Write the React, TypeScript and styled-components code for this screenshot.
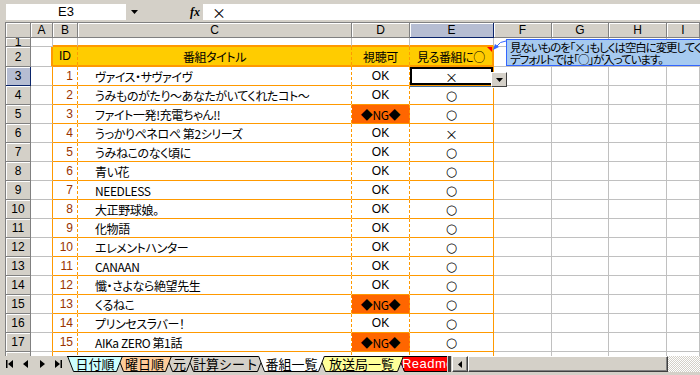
import React from 'react';
import styled, { createGlobalStyle, css } from 'styled-components';

const FACE = '#d4d0c8';
const GRID = '#c0c0c0';
const ORANGE = '#ff9900';
const JP = `"Noto Sans CJK JP", "Noto Sans", sans-serif`;
const LAT = `"Liberation Sans", Arial, sans-serif`;

const GlobalStyle = createGlobalStyle`
  html, body {
    margin: 0;
    padding: 0;
    background: ${FACE};
    overflow: hidden;
  }
  #root {
    width: 700px;
    height: 375px;
  }
`;

const Window = styled.div`
  width: 700px;
  height: 375px;
  display: flex;
  flex-direction: column;
  background: ${FACE};
`;

const FormulaBar = styled.div`
  height: 22px;
  box-sizing: border-box;
  padding: 4px 0 0 6px;
  display: flex;
  align-items: flex-start;
`;

const NameBox = styled.div`
  width: 120px;
  height: 16px;
  background: #fff;
  font: 13px ${LAT};
  line-height: 16px;
  text-align: center;
`;

const NameDrop = styled.div`
  width: 17px;
  height: 16px;
  display: flex;
  align-items: center;
  justify-content: center;
`;

const Fx = styled.div`
  margin-left: 47px;
  width: 13px;
  height: 16px;
  font: italic bold 12px "Liberation Serif", serif;
  line-height: 16px;
`;

const FormulaInput = styled.div`
  flex: 1;
  height: 16px;
  background: #fff;
  padding-left: 9px;
  font: 14px ${JP};
  line-height: 16px;
`;

const Sheet = styled.div`
  position: relative;
  margin-left: 5px;
  height: 334px;
  box-sizing: border-box;
  border-left: 1px solid #808080;
  border-top: 1px solid #808080;
  overflow: hidden;
  display: grid;
  grid-template-columns: 25px 22px 25px 274px 58px 84px 58px 57px 58px 1fr;
  grid-template-rows: 15px 9px 20px repeat(16, 19px);
  background: #fff;
`;

const HeaderCell = styled.div<{ $sel?: boolean }>`
  box-sizing: border-box;
  background: ${p => (p.$sel ? '#b6bdd2' : FACE)};
  border-right: 1px solid ${p => (p.$sel ? '#0a246a' : '#808080')};
  border-bottom: 1px solid ${p => (p.$sel ? '#0a246a' : '#808080')};
  box-shadow: inset 1px 1px 0 #fff;
  font: 12px ${LAT};
  color: #000;
  display: flex;
  align-items: center;
  justify-content: center;
  overflow: hidden;
`;

type Edge = 'grid' | 'dash' | 'solid' | 'thick';

interface CellProps {
  $right?: Edge;
  $bottom?: Edge;
  $fill?: string;
  $align?: 'left' | 'center' | 'right';
  $color?: string;
  $pad?: number;
  $active?: boolean;
}

const edge = (e: Edge = 'grid') => {
  if (e === 'thick') return `2px solid ${ORANGE}`;
  if (e === 'solid') return `1px solid ${ORANGE}`;
  if (e === 'dash') return `1px solid transparent`;
  return `1px solid ${GRID}`;
};

const Cell = styled.div<CellProps>`
  position: relative;
  box-sizing: border-box;
  min-width: 0;
  background-color: ${p => p.$fill || '#fff'};
  border-right: ${p => edge(p.$right)};
  border-bottom: ${p => edge(p.$bottom)};
  ${p =>
    p.$right === 'dash' &&
    css`
      background-image: linear-gradient(to bottom, ${ORANGE} 3px, transparent 3px);
      background-size: 1px 5px;
      background-position: right top;
      background-repeat: repeat-y;
      background-origin: border-box;
    `}
  font: 12px ${JP};
  font-feature-settings: "palt";
  letter-spacing: -0.4px;
  color: ${p => p.$color || '#000'};
  display: flex;
  align-items: center;
  justify-content: ${p =>
    p.$align === 'right' ? 'flex-end' : p.$align === 'left' ? 'flex-start' : 'center'};
  padding: 0 ${p => (p.$align === 'right' ? 4 : 0)}px 0 ${p => p.$pad || 0}px;
  white-space: nowrap;
  ${p =>
    p.$active &&
    css`
      box-shadow: inset 0 0 0 2px #000, 0 1px 0 #3a6ea5;
      z-index: 2;
    `}
`;

const IdText = styled.span`
  font: 12px ${LAT};
  letter-spacing: 0;
`;

const Mark = styled.span<{ $circle?: boolean }>`
  font: ${p => (p.$circle ? `13px "DejaVu Sans", sans-serif` : `13px ${JP}`)};
  color: #000;
  letter-spacing: 0;
`;

const CommentMark = styled.div`
  position: absolute;
  top: 0;
  right: 0;
  width: 0;
  height: 0;
  border-top: 5px solid #ff0000;
  border-left: 5px solid transparent;
`;

const FillHandle = styled.div`
  position: absolute;
  right: -3px;
  bottom: -3px;
  width: 5px;
  height: 5px;
  background: #000;
  border: 1px solid #fff;
  box-sizing: border-box;
`;

const DropButton = styled.div`
  position: absolute;
  left: calc(100% - 2px);
  top: 5px;
  width: 16px;
  height: 15px;
  box-sizing: border-box;
  background: ${FACE};
  border-top: 1px solid #fff;
  border-left: 1px solid #fff;
  border-right: 1px solid #404040;
  border-bottom: 1px solid #404040;
  display: flex;
  align-items: center;
  justify-content: center;
  z-index: 3;
`;

const Comment = styled.div`
  position: absolute;
  left: 500px;
  top: 16px;
  width: 210px;
  height: 27px;
  box-sizing: border-box;
  background: #a6caf0;
  border: 1px solid #3366ff;
  padding: 0 0 0 3px;
  font: 11.5px ${JP};
  font-feature-settings: "palt";
  letter-spacing: -1.1px;
  line-height: 12px;
  white-space: nowrap;
  z-index: 4;
  display: flex;
  flex-direction: column;
  justify-content: center;
`;

const CommentArrow = styled.svg`
  position: absolute;
  left: 486px;
  top: 16px;
  z-index: 4;
`;

const TabBar = styled.div`
  height: 19px;
  display: flex;
  align-items: flex-start;
`;

const Nav = styled.div`
  width: 67px;
  height: 16px;
  display: flex;
  align-items: center;
  padding-left: 2px;
  box-sizing: border-box;
`;

const NavButton = styled.div`
  width: 16px;
  height: 16px;
  display: flex;
  align-items: center;
  justify-content: center;
`;

const TabStrip = styled.div`
  width: 380px;
  height: 16px;
  display: flex;
  overflow: hidden;
`;

const Tab = styled.div<{ $w: number; $z: number; $first?: boolean }>`
  position: relative;
  flex: none;
  width: ${p => p.$w}px;
  height: 16px;
  margin-left: ${p => (p.$first ? 0 : -6)}px;
  z-index: ${p => p.$z};
`;

const TabShape = styled.svg`
  position: absolute;
  left: 0;
  top: 0;
`;

const TabLabel = styled.span<{ $color?: string; $latin?: boolean }>`
  position: relative;
  display: block;
  text-align: center;
  font: ${p => (p.$latin ? `13px ${LAT}` : `13px ${JP}`)};
  letter-spacing: ${p => (p.$latin ? 0.5 : 0)}px;
  line-height: 16px;
  white-space: nowrap;
  color: ${p => p.$color || '#000'};
`;

const SplitBox = styled.div`
  width: 3px;
  height: 16px;
  background: #404040;
  border-left: 1px solid ${FACE};
`;

const raised = css`
  box-sizing: border-box;
  background: ${FACE};
  border-top: 1px solid #fff;
  border-left: 1px solid #fff;
  border-right: 1px solid #404040;
  border-bottom: 1px solid #404040;
  box-shadow: inset -1px -1px 0 #808080;
`;

const ScrollButton = styled.div`
  ${raised};
  width: 16px;
  height: 16px;
  margin-left: 1px;
  display: flex;
  align-items: center;
  justify-content: center;
`;

const Thumb = styled.div`
  ${raised};
  width: 200px;
  height: 16px;
`;

const Track = styled.div`
  flex: 1;
  height: 16px;
  background-color: #fff;
  background-image: repeating-conic-gradient(${FACE} 0 25%, #fff 0 50%);
  background-size: 2px 2px;
`;

interface Row {
  id: number;
  title: string;
  ng?: boolean;
  mark: string;
}

const rows: Row[] = [
  { id: 1, title: 'ヴァイス・サヴァイヴ', mark: '×' },
  { id: 2, title: 'うみものがたり〜あなたがいてくれたコト〜', mark: '○' },
  { id: 3, title: 'ファイト一発!充電ちゃん!!', ng: true, mark: '○' },
  { id: 4, title: 'うっかりペネロペ 第2シリーズ', mark: '×' },
  { id: 5, title: 'うみねこのなく頃に', mark: '○' },
  { id: 6, title: '青い花', mark: '○' },
  { id: 7, title: 'NEEDLESS', mark: '○' },
  { id: 8, title: '大正野球娘。', mark: '○' },
  { id: 9, title: '化物語', mark: '○' },
  { id: 10, title: 'エレメントハンター', mark: '○' },
  { id: 11, title: 'CANAAN', mark: '○' },
  { id: 12, title: '懺・さよなら絶望先生', mark: '○' },
  { id: 13, title: 'くるねこ', ng: true, mark: '○' },
  { id: 14, title: 'プリンセスラバー！', mark: '○' },
  { id: 15, title: 'AIKa ZERO 第1話', ng: true, mark: '○' },
];

const columns = ['A', 'B', 'C', 'D', 'E', 'F', 'G', 'H', 'I'];

const tabs = [
  { label: '日付順', w: 56, fill: '#ccffff' },
  { label: '曜日順', w: 55, fill: '#ffcc99' },
  { label: '元', w: 27, fill: FACE },
  { label: '計算シート', w: 77, fill: FACE },
  { label: '番組一覧', w: 67, fill: '#ffffff', active: true },
  { label: '放送局一覧', w: 85, fill: '#ffff99' },
  { label: 'Readme', w: 60, fill: '#ff0000', color: '#fff', latin: true },
];

const Down = () => (
  <svg width="7" height="4" viewBox="0 0 7 4">
    <path d="M0 0h7L3.5 4z" fill="#000" />
  </svg>
);

const EmptyRight = () => (
  <>
    <Cell />
    <Cell />
    <Cell />
    <Cell />
  </>
);

const NavIcon: React.FC<{ kind: 'first' | 'prev' | 'next' | 'last' }> = ({ kind }) => (
  <svg width="8" height="8" viewBox="0 0 8 8">
    {kind === 'first' && (
      <>
        <rect x="0" y="0" width="1.5" height="8" fill="#000" />
        <path d="M7 0v8L2 4z" fill="#000" />
      </>
    )}
    {kind === 'prev' && <path d="M6 0v8L1 4z" fill="#000" />}
    {kind === 'next' && <path d="M2 0v8l5-4z" fill="#000" />}
    {kind === 'last' && (
      <>
        <path d="M1 0v8l5-4z" fill="#000" />
        <rect x="6.5" y="0" width="1.5" height="8" fill="#000" />
      </>
    )}
  </svg>
);

const App: React.FC = () => {
  return (
    <Window>
      <GlobalStyle />
      <FormulaBar>
        <NameBox>E3</NameBox>
        <NameDrop>
          <Down />
        </NameDrop>
        <Fx>fx</Fx>
        <FormulaInput>×</FormulaInput>
      </FormulaBar>

      <Sheet>
        <HeaderCell />
        {columns.map(c => (
          <HeaderCell key={c} $sel={c === 'E'}>
            {c}
          </HeaderCell>
        ))}

        <HeaderCell>1</HeaderCell>
        <Cell />
        <Cell $bottom="thick" />
        <Cell $bottom="thick" />
        <Cell $bottom="thick" />
        <Cell $bottom="thick" />
        <EmptyRight />

        <HeaderCell>2</HeaderCell>
        <Cell $right="thick" />
        <Cell $fill="#ffcc00" $right="dash" $bottom="thick">
          <IdText>ID</IdText>
        </Cell>
        <Cell $fill="#ffcc00" $right="dash" $bottom="thick">
          番組タイトル
        </Cell>
        <Cell $fill="#ffcc00" $right="dash" $bottom="thick">
          視聴可
        </Cell>
        <Cell $fill="#ffcc00" $right="thick" $bottom="thick">
          見る番組に○
          <CommentMark />
        </Cell>
        <EmptyRight />

        {rows.map((r, i) => (
          <React.Fragment key={r.id}>
            <HeaderCell $sel={i === 0}>{i + 3}</HeaderCell>
            <Cell $right="solid" />
            <Cell $right="dash" $bottom="solid" $align="right" $color="#993300">
              <IdText>{r.id}</IdText>
            </Cell>
            <Cell $right="dash" $bottom="solid" $align="left" $pad={17}>
              {r.title}
            </Cell>
            <Cell $right="dash" $bottom="solid" $fill={r.ng ? '#ff6600' : undefined}>
              {r.ng ? '◆NG◆' : <IdText>OK</IdText>}
            </Cell>
            <Cell $right="solid" $bottom="solid" $active={i === 0}>
              <Mark $circle={r.mark === '○'}>{r.mark}</Mark>
              {i === 0 && (
                <>
                  <FillHandle />
                  <DropButton>
                    <Down />
                  </DropButton>
                </>
              )}
            </Cell>
            <EmptyRight />
          </React.Fragment>
        ))}

        <HeaderCell />
        <Cell $right="solid" />
        <Cell $right="dash" />
        <Cell $right="dash" />
        <Cell $right="dash" />
        <Cell $right="solid" />
        <EmptyRight />

        <CommentArrow width="16" height="12" viewBox="0 0 16 12">
          <path d="M14 2 Q8 2 4 8" stroke="#3366ff" strokeWidth="1" fill="none" />
          <path d="M1 11 L3 5 L7 8 Z" fill="#3366ff" />
        </CommentArrow>
        <Comment>
          <div>見ないものを「×」もしくは空白に変更してください</div>
          <div>デフォルトでは「○」が入っています。</div>
        </Comment>
      </Sheet>

      <TabBar>
        <Nav>
          <NavButton>
            <NavIcon kind="first" />
          </NavButton>
          <NavButton>
            <NavIcon kind="prev" />
          </NavButton>
          <NavButton>
            <NavIcon kind="next" />
          </NavButton>
          <NavButton>
            <NavIcon kind="last" />
          </NavButton>
        </Nav>
        <TabStrip>
          {tabs.map((t, i) => (
            <Tab key={t.label} $w={t.w} $z={t.active ? 20 : 10 - i} $first={i === 0}>
              <TabShape width={t.w} height={16} viewBox={`0 0 ${t.w} 16`}>
                <polygon points={`0,0 ${t.w},0 ${t.w - 6},15.5 6,15.5`} fill={t.fill} />
                {!t.active && <line x1="0" y1="0.5" x2={t.w} y2="0.5" stroke="#000" />}
                <polyline
                  points={`0.5,0 6.5,15.5 ${t.w - 6.5},15.5 ${t.w - 0.5},0`}
                  fill="none"
                  stroke="#000"
                />
              </TabShape>
              <TabLabel $color={t.color} $latin={t.latin}>
                {t.label}
              </TabLabel>
            </Tab>
          ))}
        </TabStrip>
        <SplitBox />
        <ScrollButton>
          <svg width="4" height="7" viewBox="0 0 4 7">
            <path d="M4 0v7L0 3.5z" fill="#000" />
          </svg>
        </ScrollButton>
        <Thumb />
        <Track />
      </TabBar>
    </Window>
  );
};

export default App;
